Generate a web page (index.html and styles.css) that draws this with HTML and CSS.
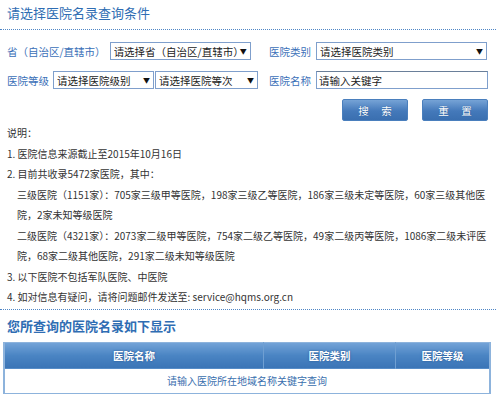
FILE: index.html
```html
<!DOCTYPE html>
<html lang="zh-CN">
<head>
    <meta charset="UTF-8">
    <title>医院名录查询</title>
    <link rel="stylesheet" href="styles.css">
</head>
<body>
    <div class="section-title">请选择医院名录查询条件</div>

    <form class="query-form">
        <div class="form-row">
            <div class="left-group">
                <label class="label">省（自治区/直辖市）</label>
                <span class="select select-province">
                    <select><option>请选择省（自治区/直辖市）</option></select>
                </span>
            </div>
            <label class="label">医院类别</label>
            <span class="select select-wide">
                <select><option>请选择医院类别</option></select>
            </span>
        </div>

        <div class="form-row">
            <div class="left-group">
                <label class="label">医院等级</label>
                <span class="select select-level">
                    <select><option>请选择医院级别</option></select>
                </span>
                <span class="select select-grade">
                    <select><option>请选择医院等次</option></select>
                </span>
            </div>
            <label class="label">医院名称</label>
            <input type="text" class="text-input" placeholder="请输入关键字">
        </div>

        <div class="button-row">
            <button type="button" class="button">搜 索</button>
            <button type="reset" class="button">重 置</button>
        </div>
    </form>

    <div class="notes">
        <p>说明：</p>
        <p>1. 医院信息来源截止至2015年10月16日</p>
        <p>2. 目前共收录5472家医院，其中：</p>
        <p class="indent">三级医院（1151家）：705家三级甲等医院，198家三级乙等医院，186家三级未定等医院，60家三级其他医院，2家未知等级医院</p>
        <p class="indent">二级医院（4321家）：2073家二级甲等医院，754家二级乙等医院，49家二级丙等医院，1086家二级未评医院，68家二级其他医院，291家二级未知等级医院</p>
        <p>3. 以下医院不包括军队医院、中医院</p>
        <p>4. 如对信息有疑问，请将问题邮件发送至: service@hqms.org.cn</p>
    </div>

    <div class="result-title">您所查询的医院名录如下显示</div>

    <table class="result-table">
        <thead>
            <tr>
                <th class="col-name">医院名称</th>
                <th class="col-type">医院类别</th>
                <th class="col-level">医院等级</th>
            </tr>
        </thead>
        <tbody>
            <tr>
                <td colspan="3">请输入医院所在地域名称关键字查询</td>
            </tr>
        </tbody>
    </table>
</body>
</html>
```

FILE: styles.css
```css
body {
    margin: 0;
    padding: 0;
    font-family: "Noto Sans CJK SC", "Noto Sans", sans-serif;
    font-size: 10px;
    color: #333;
    background: #fff;
}

.section-title {
    height: 29px;
    line-height: 26px;
    padding-left: 7px;
    font-size: 13px;
    color: #2f6db3;
    border-bottom: 1px dotted #4f86c6;
}

.query-form {
    padding: 12px 8px 0 7px;
}

.form-row {
    display: flex;
    align-items: center;
    height: 18px;
    margin-bottom: 11px;
}

.left-group {
    display: flex;
    align-items: center;
    width: 262px;
}

.label {
    margin-right: 4px;
    font-size: 10.5px;
    color: #3b70b8;
    white-space: nowrap;
}

.form-row > .label {
    width: 43px;
    margin-right: 4px;
}

.select {
    position: relative;
    display: inline-block;
    height: 18px;
}

.select select {
    appearance: none;
    -webkit-appearance: none;
    width: 100%;
    height: 18px;
    margin: 0;
    padding: 0 12px 0 3px;
    border: 1px solid #7f9fcc;
    border-radius: 0;
    background: #fff;
    font-family: inherit;
    font-size: 10.5px;
    color: #222;
    outline: none;
}

.select::after {
    content: "▼";
    position: absolute;
    right: 4px;
    top: 4px;
    font-size: 7px;
    line-height: 10px;
    color: #111;
    pointer-events: none;
}

.select-province {
    width: 141px;
}

.select-level {
    width: 101px;
}

.select-grade {
    width: 103px;
    margin-left: 1px;
}

.select-wide {
    width: 171px;
}

.text-input {
    box-sizing: border-box;
    width: 172px;
    height: 18px;
    margin: 0;
    padding: 0 2px;
    border: 1px solid #7f9fcc;
    border-top-color: #6a7f99;
    font-family: inherit;
    font-size: 10.5px;
    color: #222;
    outline: none;
}

.text-input::placeholder {
    color: #222;
}

.button-row {
    display: flex;
    justify-content: flex-end;
    gap: 14px;
    margin-top: -1px;
}

.button {
    width: 66px;
    height: 22px;
    padding: 0;
    border: 1px solid #4a7fbd;
    border-radius: 2px;
    background: linear-gradient(#76a3d6, #4479ba 55%, #3a6fb0);
    color: #fff;
    font-family: inherit;
    font-size: 10.5px;
    font-weight: normal;
    letter-spacing: 5px;
    text-indent: 5px;
    text-shadow: 0 0 1px #1d4f8c;
    cursor: pointer;
}

.notes {
    margin-top: 2px;
    padding: 0 7px;
    border-bottom: 1px dotted #4f86c6;
    padding-bottom: 1px;
}

.notes p {
    margin: 0;
    line-height: 20.5px;
    color: #333;
}

.notes p.indent {
    padding-left: 10px;
}

.result-title {
    height: 32px;
    line-height: 32px;
    padding-left: 7px;
    font-size: 13px;
    font-weight: bold;
    color: #2f6db3;
}

.result-table {
    width: 488px;
    margin-left: 3px;
    border-collapse: collapse;
    border: 1px solid #8db3dc;
    border-left-width: 2px;
    border-right-width: 2px;
}

.result-table th {
    height: 26px;
    padding: 0;
    background: linear-gradient(#74a4d8, #4a84c3 50%, #3a74b6);
    border-left: 1px solid #6f9fd2;
    color: #fff;
    font-size: 10.5px;
    font-weight: bold;
    text-shadow: 0 0 2px #1d4f8c;
}

.result-table th:first-child {
    border-left: none;
}

.col-name {
    width: 258px;
}

.col-type {
    width: 131px;
}

.result-table td {
    height: 24px;
    padding: 0;
    text-align: center;
    color: #3a6fae;
    font-size: 10px;
}
```
